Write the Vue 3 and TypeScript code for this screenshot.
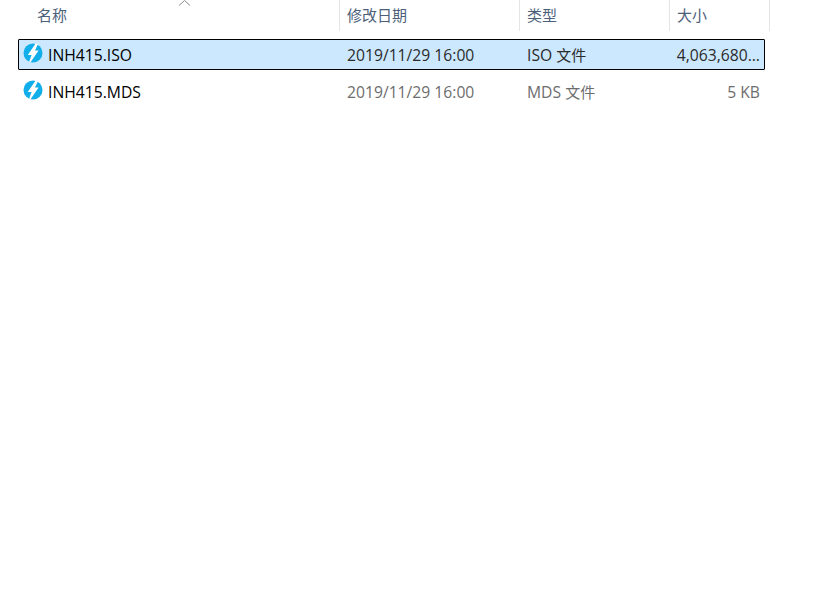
<script setup lang="ts">
interface FileRow { name: string; date: string; ext: string; size: string; selected: boolean }
const files: FileRow[] = [
  { name: 'INH415.ISO', date: '2019/11/29 16:00', ext: 'ISO', size: '4,063,680...', selected: true },
  { name: 'INH415.MDS', date: '2019/11/29 16:00', ext: 'MDS', size: '5 KB', selected: false },
]
const columns = ['修改日期', '类型', '大小']
</script>

<template>
  <div class="explorer">
    <div class="header">
      <div class="head-name">
        名称
        <svg class="sort" width="13" height="6" viewBox="0 0 13 6"><path d="M1 5.5 L6.5 0.5 L12 5.5" fill="none" stroke="#8a8a8a" stroke-width="1" /></svg>
      </div>
      <div v-for="c in columns" :key="c" class="head-cell">{{ c }}</div>
    </div>
    <div class="rows">
      <div v-for="f in files" :key="f.name" class="row" :class="{ selected: f.selected }">
        <div class="cell-name">
          <svg class="icon" width="20" height="20" viewBox="0 0 20 20">
            <circle cx="10" cy="10" r="9.5" fill="#12aeea" />
            <path d="M12.6 0.6 L15 0.9 L12 7.6 L15.6 7.6 L7.4 19.4 L6.2 18.6 L8.6 12 L4.8 12 Z" fill="#fff" />
          </svg>
          <span>{{ f.name }}</span>
        </div>
        <div class="cell-date">{{ f.date }}</div>
        <div class="cell-type">{{ f.ext }} <span class="cjk">文件</span></div>
        <div class="cell-size">{{ f.size }}</div>
      </div>
    </div>
  </div>
</template>

<style>
html, body { margin: 0; background: #fff; }
</style>

<style scoped>
.explorer {
  width: 829px;
  height: 589px;
  background: #fff;
  overflow: hidden;
  font-family: "Open Sans", "Noto Sans CJK SC", sans-serif;
  font-size: 15.7px;
}
.header {
  display: grid;
  grid-template-columns: 321px 180px 150px 101px;
  margin-left: 18px;
  width: 752px;
  height: 31px;
  color: #4c607a;
  font-family: "Noto Sans CJK SC", sans-serif;
  font-size: 15px;
}
.head-name {
  position: relative;
  padding-left: 19px;
  line-height: 30px;
}
.head-cell {
  border-left: 1px solid #e5e5e5;
  padding-left: 7px;
  line-height: 30px;
}
.head-cell:last-child { border-right: 1px solid #e5e5e5; }
.sort { position: absolute; left: 160px; top: 0; }
.rows {
  margin: 8px 0 0 18px;
  width: 747px;
  display: flex;
  flex-direction: column;
  gap: 6px;
}
.row {
  display: grid;
  grid-template-columns: 321px 180px 150px 1fr;
  height: 31px;
  box-sizing: border-box;
  align-items: center;
  color: #6d6d6d;
  border: 1px solid transparent;
  padding-top: 1px;
}
.row.selected {
  background: #cce8ff;
  border-color: #000;
  border-radius: 1px;
  color: #2b2b2b;
}
.cell-name {
  display: flex;
  align-items: center;
  color: #000;
  margin-left: 4px;
  gap: 5px;
}
.icon { margin-top: -4px; }
.cell-date { padding-left: 7px; }
.cell-type { padding-left: 7px; }
.cell-size { text-align: right; padding-right: 4px; white-space: nowrap; }
.cjk { font-family: "Noto Sans CJK SC", sans-serif; font-size: 15px; }
</style>
